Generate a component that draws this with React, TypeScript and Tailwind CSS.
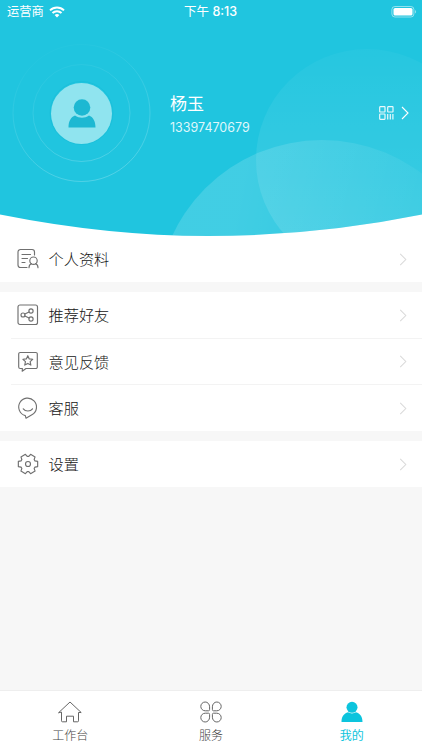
import type { ReactNode } from "react";

const cjk = "font-['Inter','Noto_Sans_CJK_SC',sans-serif]";

function Chevron({ className }: { className: string }) {
  return (
    <svg viewBox="0 0 8 14" fill="none" strokeWidth="1.100" className={className}>
      <path d="M1 1l6 6-6 6" stroke="currentColor" />
    </svg>
  );
}

function Icon({ children }: { children: ReactNode }) {
  return (
    <svg viewBox="0 0 22 22" fill="none" stroke="#707070" strokeWidth="1.150" strokeLinecap="round" strokeLinejoin="round" className="h-[22px] w-[22px] shrink-0">
      {children}
    </svg>
  );
}

function gearPath() {
  const corners: [number, number][] = [[-24, 7.6], [-15, 10], [15, 10], [24, 7.6]];
  const points: string[] = [];
  for (let tooth = 0; tooth < 6; tooth++) {
    for (const [offset, radius] of corners) {
      const angle = ((tooth * 60 + offset) * Math.PI) / 180;
      points.push(`${(11 + radius * Math.cos(angle)).toFixed(2)} ${(11 + radius * Math.sin(angle)).toFixed(2)}`);
    }
  }
  return `M${points.join("L")}Z`;
}

const profileIcon = (
  <Icon>
    <path d="M10 19.500H3.500A2.500 2.500 0 0 1 1 17V4a2.500 2.500 0 0 1 2.500-2.500H15A2.500 2.500 0 0 1 17.500 4v3M5 6.500h8.500M5 10.500h5.500M5 14.500h3" />
    <circle cx="16.500" cy="12.700" r="3.700" />
    <path d="M12 19.700c0-2 1-3.600 2.500-4M21 19.700c0-2-1-3.600-2.500-4" />
  </Icon>
);

const shareIcon = (
  <Icon>
    <rect x="1" y="1" width="19.500" height="19.500" rx="2" />
    <circle cx="6" cy="11" r="2" />
    <circle cx="14" cy="7" r="2.100" />
    <circle cx="14" cy="15" r="2.100" />
    <path d="M7.800 10.100l4.300-2.100M7.800 11.900l4.300 2.100" />
  </Icon>
);

const feedbackIcon = (
  <Icon>
    <path d="M3.200 1.500h15.600a1.500 1.500 0 0 1 1.500 1.500v13a1.500 1.500 0 0 1-1.500 1.500H9l-3.800 2.700.2-2.700H3.200A1.500 1.500 0 0 1 1.700 16V3a1.500 1.500 0 0 1 1.500-1.500z" />
    <path d="M10.800 4.700l1.450 3.200 3.450.4-2.550 2.350.7 3.450-3.050-1.700-3.050 1.700.7-3.450L5.900 8.300l3.450-.4z" />
  </Icon>
);

const serviceIcon = (
  <Icon>
    <path d="M8.300 18.600a8.900 8.900 0 1 1 6.600-.8L9 21.200z" />
    <path d="M6.300 11.800c2 2.900 7.200 2.900 9.200 0" />
  </Icon>
);

const settingsIcon = (
  <Icon>
    <path d={gearPath()} />
    <circle cx="11" cy="11" r="2.500" />
  </Icon>
);

function Row({ icon, label }: { icon: ReactNode; label: string }) {
  return (
    <div className="flex h-[46px] shrink-0 items-center bg-white pl-[17px] pr-[15px]">
      {icon}
      <span className="ml-[9.500px] mt-[2px] text-[15.200px] font-light leading-[22px] text-[#151515]">{label}</span>
      <Chevron className="ml-auto h-[13px] w-[8px] text-[#d9d9d9]" />
    </div>
  );
}

function Divider() {
  return (
    <div className="bg-white pl-[11px]">
      <div className="h-px bg-[#f3f3f3]" />
    </div>
  );
}

function HeaderArt() {
  return (
    <svg viewBox="0 0 422 236" className="absolute inset-0 h-[236px] w-[422px]" fill="none">
      <defs>
        <clipPath id="curve">
          <path d="M0 0H422V214.500Q316 236 208 236Q108 236 0 214.500Z" />
        </clipPath>
        <linearGradient id="upper" x1="0" y1="49" x2="0" y2="236" gradientUnits="userSpaceOnUse">
          <stop stopColor="#fff" stopOpacity=".03" />
          <stop offset="1" stopColor="#fff" stopOpacity=".12" />
        </linearGradient>
        <linearGradient id="lower" x1="240" y1="180" x2="422" y2="215" gradientUnits="userSpaceOnUse">
          <stop stopColor="#fff" stopOpacity=".15" />
          <stop offset="1" stopColor="#fff" stopOpacity=".04" />
        </linearGradient>
        <linearGradient id="ring" x1="55" y1="55" x2="100" y2="180" gradientUnits="userSpaceOnUse">
          <stop stopColor="#fff" stopOpacity=".02" />
          <stop offset="1" stopColor="#fff" stopOpacity=".22" />
        </linearGradient>
      </defs>
      <g clipPath="url(#curve)">
        <path fill="#20c5df" d="M0 0h422v236H0z" />
        <circle cx="367" cy="160" r="111" fill="url(#upper)" />
        <circle cx="322" cy="305" r="165" fill="url(#lower)" />
        <circle cx="81.500" cy="113" r="68.500" stroke="url(#ring)" />
        <circle cx="81.500" cy="113" r="48.500" stroke="url(#ring)" />
        <circle cx="81.500" cy="113" r="31.500" stroke="#11b5d0" strokeOpacity=".35" />
      </g>
    </svg>
  );
}

function StatusBar() {
  return (
    <div className="grid h-[22px] grid-cols-3 items-center text-[12px] leading-[22px] text-white">
      <div className="flex items-center gap-[5px] pl-[7px]">
        <span className="mt-px text-[12.300px]">运营商</span>
        <svg viewBox="0 0 16 12" className="h-[12px] w-[16px]" fill="none" stroke="white" strokeWidth="2">
          <path d="M1 4.400a10 10 0 0 1 14 0M3.500 7a6.400 6.400 0 0 1 9 0" />
          <path d="M5.600 9.100a3.400 3.400 0 0 1 4.800 0L8 11.600z" fill="white" stroke="none" />
        </svg>
      </div>
      <div className="mt-px whitespace-nowrap pr-px text-center text-[12.500px]">
        下午 <span className="font-medium">8:13</span>
      </div>
      <div className="flex justify-end pr-[5px]">
        <svg viewBox="0 0 26 12" className="h-[12px] w-[26px]" fill="none">
          <rect x=".9" y=".5" width="22" height="10.500" rx="3" stroke="white" strokeOpacity=".5" />
          <rect x="2.500" y="2" width="19" height="7.500" rx="1.600" fill="white" />
          <path d="M24.200 4v3.500c1.200-.5 1.200-3 0-3.500z" fill="white" fillOpacity=".6" />
        </svg>
      </div>
    </div>
  );
}

function Header() {
  return (
    <header className="relative h-[236px] shrink-0 bg-white">
      <HeaderArt />
      <div className="relative">
        <StatusBar />
        <div className="flex h-[182px] items-center pl-[51px] pr-[13px]">
          <div className="flex h-[61px] w-[61px] items-center justify-center rounded-full bg-[#90e4ef]">
            <svg viewBox="0 0 28 29" className="h-[29px] w-[28px]" fill="#1db8d2">
              <circle cx="14" cy="8.500" r="8.300" />
              <path d="M.5 28.500C.5 22 3 18 7 16.500c4.300 3 9.700 3 14 0 4 1.500 6.500 5.500 6.500 12z" />
            </svg>
          </div>
          <div className="ml-[58px] mt-[3px] text-white">
            <div className="text-[17px] leading-[25px]">杨玉</div>
            <div className="mt-px text-[12.500px] leading-[20px] text-[#dff7fb]">13397470679</div>
          </div>
          <svg viewBox="0 0 15 14" className="ml-auto h-[14px] w-[15px]" fill="none" stroke="#e9f9fc" strokeWidth="1.200">
            <rect x=".7" y=".7" width="5.300" height="5.300" rx=".5" />
            <rect x="8.700" y=".7" width="5.300" height="5.300" rx=".5" />
            <rect x=".7" y="8" width="5.300" height="5.300" rx=".5" />
            <path d="M8.700 8v5.500M11.300 8v5.500M13.900 8v5.500" />
          </svg>
          <Chevron className="ml-[7px] h-[14px] w-[8px] text-white" />
        </div>
      </div>
    </header>
  );
}

function Tab({ icon, label, active = false }: { icon: ReactNode; label: string; active?: boolean }) {
  return (
    <div className={`flex flex-1 flex-col items-center pt-[9px] ${active ? "text-[#0cc4dd]" : "text-[#666]"}`}>
      <svg viewBox="0 0 24 24" className="h-[24px] w-[24px]" fill="none" stroke="currentColor" strokeWidth="1" strokeLinejoin="round" strokeLinecap="round">
        {icon}
      </svg>
      <span className={`mt-[3px] text-[12px] leading-[18px] ${active ? "font-normal" : "font-light text-[#444]"}`}>{label}</span>
    </div>
  );
}

export default function App() {
  return (
    <div className={`flex h-[750px] w-[422px] flex-col overflow-hidden bg-[#f7f7f7] ${cjk}`}>
      <Header />
      <Row icon={profileIcon} label="个人资料" />
      <div className="mt-[10px] flex shrink-0 flex-col">
        <Row icon={shareIcon} label="推荐好友" />
        <Divider />
        <div className="flex h-[45px] flex-col justify-center">
          <Row icon={feedbackIcon} label="意见反馈" />
        </div>
        <Divider />
        <Row icon={serviceIcon} label="客服" />
      </div>
      <div className="mt-[10px] shrink-0">
        <Row icon={settingsIcon} label="设置" />
      </div>
      <nav className="mt-auto flex h-[60px] shrink-0 border-t border-[#eee] bg-white">
        <Tab label="工作台" icon={<path d="M.8 12.500L12 2l11.200 10.500h-2.700v8.300a1 1 0 0 1-1 1h-4v-5.600H8.500v5.600h-4a1 1 0 0 1-1-1v-8.300z" />} />
        <Tab
          label="服务"
          icon={
            <>
              <path d="M10.600 9.800a1 1 0 0 1-1 1H6.300A4.400 4.400 0 1 1 10.600 6.400z" />
              <path d="M13.400 9.800a1 1 0 0 0 1 1h3.300a4.400 4.400 0 1 0-4.300-4.400z" />
              <path d="M10.600 14.200a1 1 0 0 0-1-1H6.300a4.400 4.400 0 1 0 4.300 4.400z" />
              <path d="M13.400 14.200a1 1 0 0 1 1-1h3.300a4.400 4.400 0 1 1-4.300 4.400z" />
            </>
          }
        />
        <Tab
          active
          label="我的"
          icon={
            <g fill="currentColor" stroke="none">
              <circle cx="12" cy="7.300" r="5.500" />
              <path d="M1.500 22c0-5.500 2.500-8.500 6.500-9.700 2.600 1.500 5.400 1.500 8 0 4 1.200 6.500 4.200 6.500 9.700z" />
            </g>
          }
        />
      </nav>
    </div>
  );
}
